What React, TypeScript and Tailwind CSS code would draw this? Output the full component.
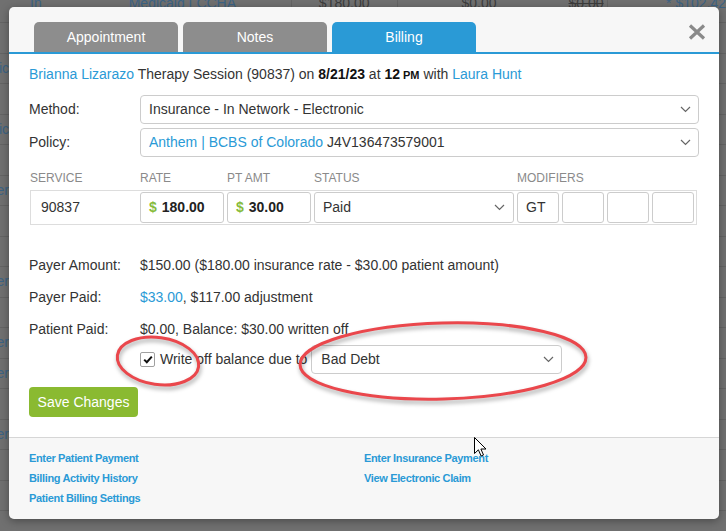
import React from "react";

const Chevron = () => (
  <svg width="11" height="7" viewBox="0 0 11 7" className="shrink-0">
    <path d="M1 1l4.5 4.5L10 1" fill="none" stroke="#666" strokeWidth="1.2" />
  </svg>
);

const bgRows: { left: string; right: string }[] = [
  { left: "", right: "$0.00" },
  { left: "Electronic", right: "$0.00" },
  { left: "", right: "5.00" },
  { left: "Electronic", right: "$0.00" },
  { left: "", right: "2.00" },
  { left: "Paper", right: "$0.00" },
  { left: "", right: "0.00" },
  { left: "", right: "5.00" },
  { left: "Paper", right: "$0.00" },
  { left: "", right: "5.00" },
  { left: "Paper", right: "0.00" },
  { left: "Paper", right: "5.00" },
  { left: "", right: "0.00" },
  { left: "Paper", right: "$0.00" },
  { left: "", right: "0.00" },
  { left: "", right: "5.00" },
];

export default function App() {
  return (
    <div className="relative w-[726px] h-[531px] overflow-hidden bg-[#707070] font-[family-name:'Liberation_Sans',Arial,sans-serif] text-[14px]">
      {/* dimmed background table */}
      <div className="flex flex-col">
        <div className="flex h-[23px] border-b border-[#646464] text-[14px] leading-[20px]">
          <div className="w-[300px] border-r border-[#646464] flex -mt-[7px] h-[20px]">
            <span className="ml-[30px] text-[#3c6384]">In</span>
            <span className="ml-[87px] text-[#3c6384]">Medicaid LCCHA</span>
          </div>
          <div className="w-[108px] border-r border-[#646464] flex justify-end pr-[28px] -mt-[7px] h-[20px] text-[#3d3d3d]">
            $180.00
          </div>
          <div className="w-[215px] border-r border-[#646464] flex -mt-[7px] h-[20px] text-[#3d3d3d]">
            <span className="ml-[63px]">$0.00</span>
            <span className="ml-[72px] line-through">$0.00</span>
          </div>
          <div className="flex-1 -mt-[7px] h-[20px] pl-[58px] text-[#3c6384] whitespace-nowrap">* $102.42</div>
        </div>
        {bgRows.map((r, i) => (
          <div key={i} className="flex h-[30.5px] border-b border-[#646464] items-center text-[14px] text-[#3c6384]">
            <div className="w-[9px] overflow-hidden flex justify-end whitespace-nowrap">
              <span>{r.left}</span>
            </div>
            <div className="w-[291px] h-full border-r border-[#646464]" />
            <div className="w-[108px] h-full border-r border-[#646464]" />
            <div className="w-[215px] h-full border-r border-[#646464]" />
            <div className="flex-1 h-full flex items-center pl-[57px] whitespace-nowrap overflow-hidden">
              {r.right}
            </div>
          </div>
        ))}
      </div>

      {/* modal */}
      <div className="absolute left-[9px] top-[7px] w-[710px] rounded-[5px] overflow-hidden shadow-[0_2px_8px_rgba(0,0,0,0.35)] text-[#333]">
        {/* header with tabs */}
        <div className="flex items-start justify-between bg-[#f7f7f7] border-b-2 border-[#2a9ad6]">
          <div className="flex gap-[5px] pl-[25px] pt-[15px]">
            <div className="w-[144px] h-[30px] rounded-t-[5px] bg-[#8d8d8d] text-white flex items-center justify-center">
              Appointment
            </div>
            <div className="w-[144px] h-[30px] rounded-t-[5px] bg-[#8d8d8d] text-white flex items-center justify-center">
              Notes
            </div>
            <div className="w-[144px] h-[30px] rounded-t-[5px] bg-[#2a9ad6] text-white flex items-center justify-center">
              Billing
            </div>
          </div>
          <svg width="18" height="16" viewBox="0 0 18 16" className="mt-[17px] mr-[13px]">
            <path d="M2 1.5L16 14.5M16 1.5L2 14.5" stroke="#8a8a8a" strokeWidth="3.2" strokeLinecap="butt" />
          </svg>
        </div>

        {/* body */}
        <div className="bg-white px-[20px] pt-[10px] pb-[20px]">
          <div className="leading-[20px] whitespace-nowrap">
            <span className="text-[#2a9ad6]">Brianna Lizarazo</span> Therapy Session (90837) on{" "}
            <b className="text-[#111]">8/21/23</b> at <b className="text-[#111]">12</b>
            <b className="text-[11px] text-[#111] ml-[3px]">PM</b> with{" "}
            <span className="text-[#2a9ad6]">Laura Hunt</span>
          </div>

          <div className="flex items-center mt-[10px]">
            <div className="w-[111px]">Method:</div>
            <div className="flex-1 flex items-center justify-between h-[29px] border border-[#ccc] rounded-[4px] pl-[8px] pr-[7px] bg-white">
              <span>Insurance - In Network - Electronic</span>
              <Chevron />
            </div>
          </div>
          <div className="flex items-center mt-[4px]">
            <div className="w-[111px]">Policy:</div>
            <div className="flex-1 flex items-center justify-between h-[29px] border border-[#ccc] rounded-[4px] pl-[8px] pr-[7px] bg-white">
              <span>
                <span className="text-[#2a9ad6]">Anthem | BCBS of Colorado</span> J4V136473579001
              </span>
              <Chevron />
            </div>
          </div>

          <div className="flex mt-[14px] ml-[1px] text-[12px] leading-[14px] text-[#8a8a8a] uppercase">
            <div className="w-[110px]">Service</div>
            <div className="w-[87px]">Rate</div>
            <div className="w-[87px]">Pt Amt</div>
            <div className="w-[203px]">Status</div>
            <div>Modifiers</div>
          </div>

          <div className="flex items-center mt-[5px] ml-[1px] w-[667px] border border-[#ddd] py-[1px] pr-[2px]">
            <div className="w-[109px] pl-[10px]">90837</div>
            <div className="flex gap-[3px]">
              <div className="w-[84px] h-[31px] border border-[#ccc] rounded-[3px] flex items-center pl-[8px] font-bold">
                <span className="text-[#86bb3c]">$</span>
                <span className="ml-[5px] text-[#222]">180.00</span>
              </div>
              <div className="w-[84px] h-[31px] border border-[#ccc] rounded-[3px] flex items-center pl-[8px] font-bold">
                <span className="text-[#86bb3c]">$</span>
                <span className="ml-[5px] text-[#222]">30.00</span>
              </div>
              <div className="w-[200px] h-[31px] border border-[#ccc] rounded-[3px] flex items-center justify-between pl-[8px] pr-[8px]">
                <span>Paid</span>
                <Chevron />
              </div>
              <div className="w-[42px] h-[31px] border border-[#ccc] rounded-[3px] flex items-center pl-[8px]">GT</div>
              <div className="w-[42px] h-[31px] border border-[#ccc] rounded-[3px]" />
              <div className="w-[42px] h-[31px] border border-[#ccc] rounded-[3px]" />
              <div className="w-[42px] h-[31px] border border-[#ccc] rounded-[3px]" />
            </div>
          </div>

          <div className="flex mt-[30px] leading-[20px]">
            <div className="w-[111px]">Payer Amount:</div>
            <div>$150.00 ($180.00 insurance rate - $30.00 patient amount)</div>
          </div>
          <div className="flex mt-[12px] leading-[20px]">
            <div className="w-[111px]">Payer Paid:</div>
            <div>
              <span className="text-[#2a9ad6]">$33.00</span>, $117.00 adjustment
            </div>
          </div>
          <div className="flex mt-[12px] leading-[20px]">
            <div className="w-[111px]">Patient Paid:</div>
            <div>$0.00, Balance: $30.00 written off</div>
          </div>

          <div className="flex items-center mt-[6px] pl-[111px]">
            <div className="w-[15px] h-[15px] border border-[#a0a0a0] rounded-[2px] bg-white flex items-center justify-center">
              <svg width="10" height="9" viewBox="0 0 10 9">
                <path d="M1.2 4.6L3.8 7.2L8.8 1.6" fill="none" stroke="#111" strokeWidth="2" />
              </svg>
            </div>
            <span className="ml-[5px]">Write off balance due to</span>
            <div className="ml-[4px] w-[251px] flex items-center justify-between h-[29px] border border-[#ccc] rounded-[4px] pl-[9px] pr-[7px] bg-white">
              <span>Bad Debt</span>
              <Chevron />
            </div>
          </div>

          <button className="mt-[13px] w-[109px] h-[30px] bg-[#8aba31] rounded-[4px] text-white text-[14px] flex items-center justify-center">
            Save Changes
          </button>
        </div>

        {/* footer */}
        <div className="border-t border-[#d6d6d6] bg-[#f7f7f7] px-[20px] pt-[10px] pb-[11px] grid grid-cols-2 text-[11px] font-bold tracking-[-0.35px] leading-[20px] text-[#2a9ad6]">
          <div className="flex flex-col">
            <span>Enter Patient Payment</span>
            <span>Billing Activity History</span>
            <span>Patient Billing Settings</span>
          </div>
          <div className="flex flex-col">
            <span>Enter Insurance Payment</span>
            <span>View Electronic Claim</span>
          </div>
        </div>
      </div>

      {/* red annotation ellipses */}
      <svg
        className="absolute left-0 top-0 pointer-events-none drop-shadow-[1px_3px_2px_rgba(0,0,0,0.35)]"
        width="726"
        height="531"
        viewBox="0 0 726 531"
      >
        <ellipse cx="158" cy="361" rx="41" ry="23.5" transform="rotate(8 158 361)" fill="none" stroke="#ea474c" strokeWidth="3" />
        <ellipse cx="443" cy="361" rx="143" ry="38" transform="rotate(-1.5 443 361)" fill="none" stroke="#ea474c" strokeWidth="3" />
      </svg>

      {/* mouse cursor */}
      <svg className="absolute left-[474px] top-[437px] pointer-events-none" width="13" height="20" viewBox="0 0 13 20">
        <path d="M0.5 0.5L0.5 16.5L4.4 12.8L7.1 19L9.5 18L6.9 12L12 12Z" fill="#fff" stroke="#000" strokeWidth="1" strokeLinejoin="round" />
      </svg>
    </div>
  );
}
